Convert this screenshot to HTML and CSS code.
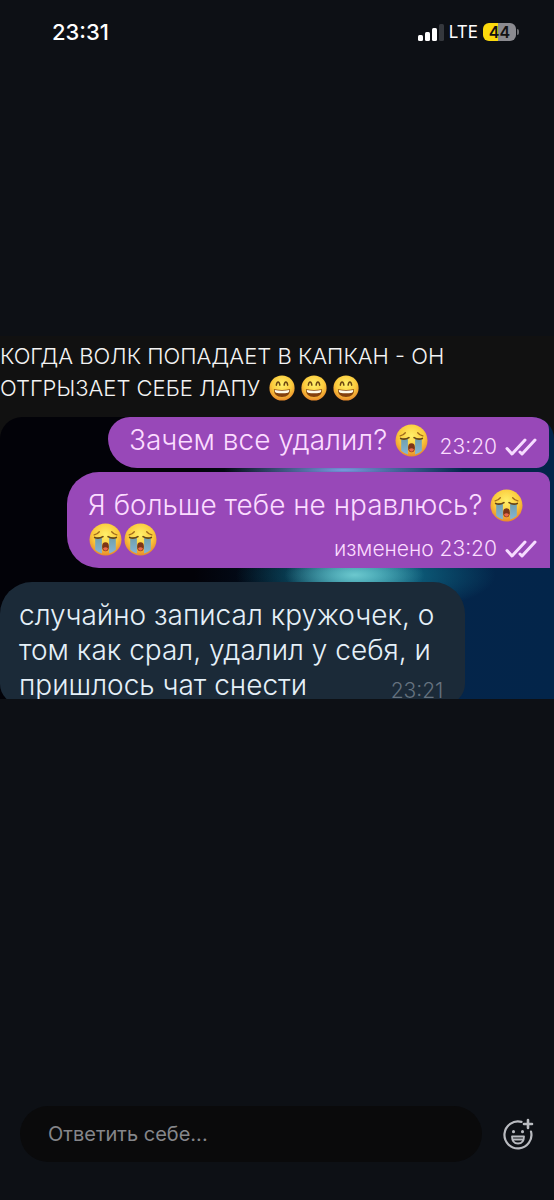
FILE: index.html
```html
<!DOCTYPE html>
<html lang="ru">
<head>
<meta charset="utf-8">
<meta name="viewport" content="width=device-width, initial-scale=1">
<title>История</title>
<link rel="stylesheet" href="styles.css">
</head>
<body>
<svg class="defs" aria-hidden="true">
  <defs>
    <radialGradient id="face" cx="50%" cy="35%" r="65%">
      <stop offset="0" stop-color="#fff06a"/>
      <stop offset=".6" stop-color="#fbcb3c"/>
      <stop offset="1" stop-color="#e8892b"/>
    </radialGradient>
    <linearGradient id="tear" x1="0" y1="0" x2="0" y2="1">
      <stop offset="0" stop-color="#6f9eac"/>
      <stop offset="1" stop-color="#84b6d6"/>
    </linearGradient>
    <symbol id="grin" viewBox="0 0 32 32">
      <circle cx="16" cy="16" r="15.500" fill="url(#face)"/>
      <path d="M9 12.500q.5-4 2.200-4t2.200 4M18.600 12.500q.5-4 2.200-4t2.200 4" fill="none" stroke="#6a4612" stroke-width="1.800" stroke-linecap="round"/>
      <path d="M6 17.500q10 2 20 0q0 9.500-10 9.500t-10-9.500z" fill="#83400e"/>
      <path d="M7 18.500q9 1.800 18 0q0 2.800-1.500 3.200q-7.500 1.500-15 0q-1.500-.4-1.500-3.200z" fill="#fffbe9"/>
    </symbol>
    <symbol id="sob" viewBox="0 0 32 32">
      <circle cx="16" cy="16" r="15.500" fill="url(#face)"/>
      <path d="M6 14h6.500v15.500q-3.500-.8-6.500-3.500zM19.500 14h6.500v12q-3 2.700-6.500 3.500z" fill="url(#tear)"/>
      <path d="M5 11.500q3-.5 5-3M27 11.500q-3-.5-5-3" fill="none" stroke="#a06a1c" stroke-width="1.300" stroke-linecap="round"/>
      <path d="M5.500 14q4 1.500 8-.8M26.500 14q-4 1.500-8-.8" fill="none" stroke="#6a4612" stroke-width="1.600" stroke-linecap="round"/>
      <ellipse cx="16" cy="23" rx="3.300" ry="4.300" fill="#7b3518"/>
      <path d="M13.600 24.500q2.400-2 4.800 0q-.5 2.500-2.400 2.500t-2.400-2.500z" fill="#ec6a4a"/>
    </symbol>
    <symbol id="read" viewBox="0 0 32 20">
      <path d="M2 11.500l5 5.500L20 3M15 15l2 2L30 3" fill="none" stroke="#f6dcff" stroke-width="3" stroke-linecap="round" stroke-linejoin="round"/>
    </symbol>
  </defs>
</svg>

<header class="status">
  <time class="clock">23:31</time>
  <div class="indicators">
    <svg class="signal" viewBox="0 0 26 17" role="img" aria-label="Сигнал">
      <g fill="#fff"><rect y="11" width="5" height="6" rx="1.500"/><rect x="7" y="8" width="5" height="9" rx="1.500"/><rect x="14" y="4" width="5" height="13" rx="1.500"/></g>
      <rect x="21" width="5" height="17" rx="1.500" fill="#35383d"/>
    </svg>
    <span class="network">LTE</span>
    <span class="battery">44</span>
  </div>
</header>

<main class="story">
  <article class="post">
    <p class="caption">КОГДА ВОЛК ПОПАДАЕТ В КАПКАН - ОН<br>ОТГРЫЗАЕТ СЕБЕ ЛАПУ
      <span class="grins"><svg class="grin"><use href="#grin"/></svg><svg class="grin"><use href="#grin"/></svg><svg class="grin"><use href="#grin"/></svg></span>
    </p>
    <section class="chat">
      <div class="bubble out first">
        <p class="words">Зачем все удалил? <svg class="sob"><use href="#sob"/></svg></p>
        <p class="meta">23:20 <svg class="read"><use href="#read"/></svg></p>
      </div>
      <div class="bubble out second">
        <p class="words">Я больше тебе не нравлюсь? <svg class="sob"><use href="#sob"/></svg></p>
        <div class="last">
          <p class="sobs"><svg class="sob"><use href="#sob"/></svg><svg class="sob"><use href="#sob"/></svg></p>
          <p class="meta">изменено 23:20 <svg class="read"><use href="#read"/></svg></p>
        </div>
      </div>
      <div class="bubble in">
        <p class="words">случайно записал кружочек, о<br>том как срал, удалил у себя, и</p>
        <div class="last">
          <p class="words">пришлось чат снести</p>
          <p class="meta">23:21</p>
        </div>
      </div>
    </section>
  </article>
</main>

<footer class="reply">
  <input class="field" type="text" placeholder="Ответить себе..." aria-label="Ответить себе">
  <button class="react" type="button" aria-label="Добавить реакцию">
    <svg viewBox="0 0 32 32" fill="none" stroke="#b9bbc0" stroke-width="2.200" stroke-linecap="round" stroke-linejoin="round">
      <path d="M19.500 3.900A13.500 13.500 0 1 0 29 13.500"/>
      <path d="M26 2v8M22 6h8" stroke-width="2.600"/>
      <path d="M10 18.500h12q0 7-6 7t-6-7zM11 21.500h10" stroke-width="1.800"/>
      <path d="M11.500 13.500v.2M20.500 13.500v.2" stroke-width="3"/>
    </svg>
  </button>
</footer>
</body>
</html>
```
FILE: styles.css
```css
* { box-sizing: border-box; }

body {
  margin: 0;
  min-height: 100vh;
  display: flex;
  flex-direction: column;
  background: #0d1015;
  color: #fff;
  font-family: Inter, "Noto Sans", sans-serif;
}

p { margin: 0; }

.defs { position: absolute; width: 0; height: 0; }

.status {
  display: flex;
  justify-content: space-between;
  align-items: center;
  height: 64px;
  padding: 0 38px 0 52px;
}

.clock { font-size: 22px; font-weight: 500; }

.indicators { display: flex; align-items: center; gap: 5px; }

.signal { width: 26px; height: 17px; }

.network { font-size: 17px; }

.battery {
  position: relative;
  width: 33px;
  height: 18px;
  border-radius: 6px;
  background: linear-gradient(90deg, #fbd90c 44%, #8b8b90 44%);
  color: #111;
  font-size: 16px;
  font-weight: 600;
  line-height: 18px;
  text-align: center;
}

.battery::after {
  content: "";
  position: absolute;
  left: 100%;
  top: 6px;
  width: 2px;
  height: 6px;
  margin-left: 1px;
  border-radius: 0 2px 2px 0;
  background: #6d6e72;
}

.story {
  flex: 1;
  display: flex;
  flex-direction: column;
  justify-content: center;
  padding-bottom: 136px;
}

.post { background: #111; }

.caption {
  padding: 4px 0 12px;
  font-size: 22px;
  line-height: 32px;
  font-weight: 300;
  color: #f4f4f4;
}

.grins { display: inline-flex; gap: 6px; padding: 0 0 4px 3px; vertical-align: middle; }

.grin { width: 26px; height: 26px; }

.chat {
  display: flex;
  flex-direction: column;
  height: 282px;
  overflow: hidden;
  border-radius: 22px 22px 0 0;
  background:
    radial-gradient(ellipse 70px 24px at 64% 158px, #6cc8ce, transparent),
    radial-gradient(ellipse 130px 40px at 66% 158px, #117c94, transparent),
    radial-gradient(ellipse 120px 12px at 62% 53px, #7a9ae0, transparent),
    linear-gradient(90deg, #020208 35%, #04254a 75%, #03254a);
}

.bubble { flex: none; font-weight: 300; }

.words { font-size: 28px; line-height: 35px; white-space: nowrap; }

.meta {
  display: flex;
  align-items: center;
  gap: 8px;
  font-size: 21px;
  line-height: 26px;
  white-space: nowrap;
}

.out { background: #9848b8; color: #fbdcff; }

.first {
  display: flex;
  justify-content: space-between;
  align-items: flex-end;
  margin: 0 5px 4px 108px;
  padding: 6px 12px 8px 21px;
  border-radius: 24px 14px 14px 32px;
}

.first .words { padding-bottom: 2px; }

.second {
  margin: 0 4px 14px 67px;
  padding: 16px 13px 6px 21px;
  border-radius: 32px 12px 0 32px;
}

.last { display: flex; justify-content: space-between; align-items: flex-end; }

.sob { width: 33px; height: 33px; vertical-align: -7px; }

.sobs { display: flex; gap: 2px; height: 39px; padding-left: 1px; }

.read { width: 32px; height: 20px; }

.in {
  width: 84%;
  padding: 16px 22px 0 19px;
  border-radius: 32px 32px 20px 20px;
  background: #1b2a38;
  color: #e5f0f8;
}

.in .last { align-items: flex-start; }

.in .meta { padding-top: 10px; color: #65727f; }

.reply {
  display: flex;
  align-items: center;
  gap: 20px;
  padding: 0 20px 38px;
}

.field {
  flex: 1;
  min-width: 0;
  height: 56px;
  padding: 0 28px;
  border: 0;
  border-radius: 28px;
  background: #0a0a0b;
  color: #fff;
  font: 400 20px Inter, "Noto Sans", sans-serif;
}

.field::placeholder { color: #85868a; opacity: 1; }

.react { width: 32px; height: 32px; padding: 0; border: 0; background: none; }

.react svg { display: block; width: 32px; height: 32px; }
```
